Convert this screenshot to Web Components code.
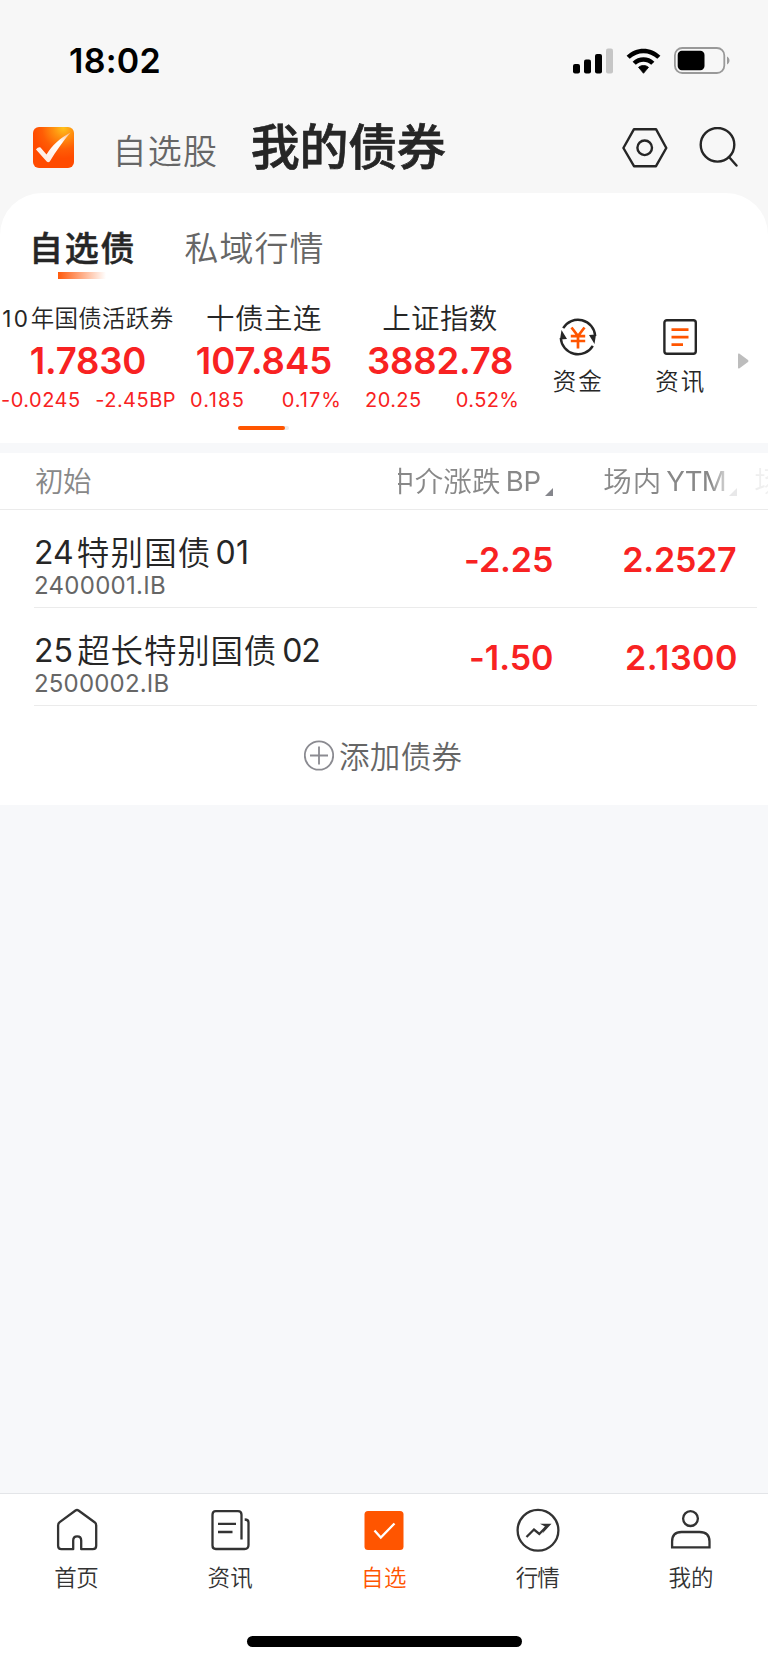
<!DOCTYPE html>
<html lang="zh-CN">
<head>
<meta charset="utf-8">
<title>我的债券</title>
<style>
html,body{margin:0;padding:0;background:#f7f8fa}
body{font-family:Inter,"Noto Sans CJK SC",sans-serif;color:#262626}
</style>
</head>
<body>
<bond-app></bond-app>
<script>
const define = (name, html) => customElements.define(name, class extends HTMLElement {
  constructor() {
    super();
    this.attachShadow({ mode: 'open' }).innerHTML = '<style>*{box-sizing:border-box}svg{display:block;flex:none}ink-text{flex:none}</style>' + html;
  }
});

/* A single line of text tracked out so that its drawn glyphs fill the width w. */
customElements.define('ink-text', class extends HTMLElement {
  constructor() {
    super();
    this.attachShadow({ mode: 'open' }).innerHTML =
      '<style>:host{display:block;white-space:nowrap}span{display:block}</style><span><slot></slot></span>';
  }
  connectedCallback() {
    const text = this.textContent.trim();
    const w = +this.getAttribute('w'), size = +this.getAttribute('s');
    const cjk = /[\u4e00-\u9fff]/.test(text);
    const weight = this.getAttribute('wt') || (cjk ? 350 : 400), line = this.getAttribute('h') || size;
    const ctx = document.createElement('canvas').getContext('2d');
    ctx.font = `${weight} ${size}px Inter, "Noto Sans CJK SC", sans-serif`;
    const m = ctx.measureText(text);
    const ink = m.actualBoundingBoxRight + m.actualBoundingBoxLeft;
    const n = [...text].length;
    const ls = n > 1 ? (w - ink) / (n - 1) : 0;
    this.style.cssText += `;width:${w}px;font-size:${size}px;font-weight:${weight};line-height:${line}px;letter-spacing:${ls.toFixed(3)}px`;
    this.shadowRoot.querySelector('span').style.marginLeft = m.actualBoundingBoxLeft + 'px';
  }
});

define('status-bar', `
<style>
:host{display:flex;align-items:center;height:121px;padding-left:70px;color:#000}
.cell{margin-left:413px}.wifi{margin-left:13px}.bat{margin-left:13px}
</style>
<ink-text w="89.5" s="34" wt="600" style="padding-top:1px">18:02</ink-text>
<svg class="cell" width="40" height="26" viewBox="0 0 40 26"><rect x="0" y="16" width="7" height="9.5" rx="2"/><rect x="11" y="11.5" width="7" height="14" rx="2"/><rect x="22" y="6" width="7" height="19.5" rx="2"/><rect x="33" y=".5" width="7" height="25" rx="2" fill="#c6c6c6"/></svg>
<svg class="wifi" width="35" height="26" viewBox="0 0 35 26"><path d="M.6 7.7C10-1.7 25-1.7 34.4 7.7L31.3 10.8C23.7 3.3 11.3 3.3 3.7 10.8Z"/><path d="M6.6 13.7C12.7 7.8 22.3 7.8 28.4 13.7L25.2 16.7C20.9 12.6 14.1 12.6 9.8 16.7Z"/><path d="M12.5 19.3C15.3 16.9 19.7 16.9 22.5 19.3L17.5 25.3Z" stroke="#000" stroke-width=".8" stroke-linejoin="round"/></svg>
<svg class="bat" width="56" height="27" viewBox="0 0 56 27"><rect x=".9" y="1" width="49.4" height="25" rx="7.4" fill="none" stroke="#999" stroke-width="1.8"/><rect x="3.7" y="3.8" width="26.8" height="19.4" rx="4.2"/><path d="M53 9.5C56.3 11 56.3 16 53 17.5Z" fill="#9b9b9b"/></svg>`);

define('app-header', `
<style>
:host{display:flex;align-items:center;height:72px;padding:0 0 19px 33px}
.other{color:#666;margin:8px 0 0 43.500px}.title{margin:-1px 0 0 35.800px;-webkit-text-stroke:.7px #262626}
.set{margin-left:177.500px}.find{margin-left:31px}
</style>
<svg width="41" height="41" viewBox="0 0 41 41"><defs><radialGradient id="g" cx=".74" cy=".02" r=".75"><stop offset="0" stop-color="#ffc21c"/><stop offset=".3" stop-color="#ff9410"/><stop offset=".7" stop-color="#ff5d05"/><stop offset="1" stop-color="#ff4b00"/></radialGradient><linearGradient id="c" x1="1" y1="0" x2=".3" y2="1"><stop offset="0" stop-color="#ffb27c"/><stop offset=".35" stop-color="#fff"/><stop offset="1" stop-color="#ffe9de"/></linearGradient></defs><rect width="41" height="41" rx="6" fill="url(#g)"/><path d="M3 22.5C4.500 20.700 6 20 7.500 20.500L13.500 27.500C19 18.500 27 11 37.500 5.500C30 14.500 23 24 16.800 34.500Q15.200 36 13.700 34.500Z" fill="url(#c)"/></svg>
<ink-text class="other" w="98.5" s="34">自选股</ink-text>
<ink-text class="title" w="193" s="49" wt="500">我的债券</ink-text>
<svg class="set" width="46" height="40" viewBox="0 0 46 40" fill="none" stroke="#262626" stroke-width="2.4"><path d="M12 1.200H34L44.300 20L34 38.200H12L1.400 20Z" stroke-linejoin="round"/><circle cx="22.700" cy="19.800" r="7.300"/></svg>
<svg class="find" width="39" height="41" viewBox="0 0 39 41" fill="none" stroke="#262626" stroke-width="2.4"><circle cx="18.500" cy="17.800" r="16.800"/><path d="M30 30L37.500 38.500" stroke-linecap="round"/></svg>`);

define('page-tabs', `
<style>
:host{display:flex;align-items:flex-start;padding:38px 0 0 34px;height:86px}
.bar{width:48px;height:7px;margin:6px 0 0 24px;background:linear-gradient(90deg,#ff5a0c,#fff)}
.off{color:#666;margin-left:51px}
.on{-webkit-text-stroke:.5px #262626}
</style>
<div><ink-text class="on" w="99.500" s="34" h="36">自选债</ink-text><div class="bar" style="margin-top:5px"></div></div>
<ink-text class="off" w="138" s="34" h="36">私域行情</ink-text>`.replace('s="34" h="36">自', 's="34" h="36" wt="500">自'));

define('quote-card', `
<style>
:host{display:flex;flex-direction:column;align-items:center;width:176px;flex:none;color:#f82222}
.name{display:flex;height:31px;gap:5px;color:#262626;margin-bottom:9px}
.row{display:flex;justify-content:space-between;align-self:stretch;margin-top:11px}
</style>
<div class="name"><slot name="name"></slot></div><slot name="price"></slot><div class="row"><slot name="change"></slot></div>`);

define('short-cut', `
<style>:host{display:flex;flex-direction:column;align-items:center;width:49px;color:#262626;padding-top:15px;gap:14px}</style>
<slot></slot>`);

define('market-strip', `
<style>
:host{display:block;height:163px;padding-top:24px}
.quotes{display:flex;height:107px}
.go{margin:50px 0 0 32px}
.track{width:51px;height:4px;border-radius:2px;background:#ebebeb;margin:16px 0 0 238px}
.fill{width:47px;height:4px;border-radius:2px;background:#ff5500}
.l1{margin-left:2px}.r1{margin-right:1.300px}.l2{margin-left:15px}.r2{margin-right:12.700px}.l3{margin-left:14px}.r3{margin-right:10.700px}
.s1{margin-left:25px}.s2{margin-left:53.500px}
</style>
<div class="quotes">
<quote-card><ink-text slot="name" w="23.300" s="22.500" h="31">10</ink-text><ink-text slot="name" w="141" s="23.500" h="31">年国债活跃券</ink-text><ink-text slot="price" w="114.500" s="36.500" h="36" wt="600">1.7830</ink-text><ink-text slot="change" class="l1" w="77" s="20">-0.0245</ink-text><ink-text slot="change" class="r1" w="78.500" s="20">-2.45BP</ink-text></quote-card>
<quote-card><ink-text slot="name" w="114" s="28.500" h="31">十债主连</ink-text><ink-text slot="price" w="134.500" s="36.500" h="36" wt="600">107.845</ink-text><ink-text slot="change" class="l2" w="51.700" s="20">0.185</ink-text><ink-text slot="change" class="r2" w="56.700" s="20">0.17%</ink-text></quote-card>
<quote-card><ink-text slot="name" w="113.500" s="28.500" h="31">上证指数</ink-text><ink-text slot="price" w="144" s="36.500" h="36" wt="600">3882.78</ink-text><ink-text slot="change" class="l3" w="54" s="20">20.25</ink-text><ink-text slot="change" class="r3" w="60.600" s="20">0.52%</ink-text></quote-card>
<short-cut class="s1"><svg width="38" height="38" viewBox="0 0 38 38" fill="none" stroke="#262626" stroke-width="2.4"><path d="M4.200 10.200A17.200 17.200 0 0 1 36.200 18M33.800 27.800A17.200 17.200 0 0 1 1.800 20"/><path d="M2.500 12L8 21L1 21.500ZM35.500 26L30 17L37 16.500Z" fill="#262626" stroke="none"/><path d="M12.500 9.500L19 18L25.500 9.500M11.800 18.200H26.200M11.800 23H26.200M19 18V30.500" stroke="#ff5500" stroke-width="2.700"/></svg><ink-text w="47.500" s="23.500" h="24">资金</ink-text></short-cut>
<short-cut class="s2"><svg width="38" height="38" viewBox="0 0 38 38" fill="none"><rect x="3.400" y="2.200" width="31.400" height="33.600" rx="2.500" stroke="#262626" stroke-width="2.400"/><path d="M10.500 11.700H27.500M10.500 19.200H27.500M10.500 26.700H22" stroke="#ff5500" stroke-width="2.700"/></svg><ink-text w="47.500" s="23.500" h="24">资讯</ink-text></short-cut>
<svg class="go" width="12" height="16" viewBox="0 0 12 16"><path d="M1 1.500Q1 0 2.200 .6L11 7Q12 8 11 9L2.200 15.400Q1 16 1 14.500Z" fill="#bdbdbd"/></svg>
</div>
<div class="track"><div class="fill"></div></div>`);

define('table-head', `
<style>
:host{display:flex;height:57px;align-items:center;border-bottom:1px solid #ebebeb;color:#888;padding-left:36px;box-sizing:border-box}
.scroll{display:flex;align-items:center;width:370px;height:56px;margin-left:307px;overflow:hidden;-webkit-mask-image:linear-gradient(90deg,#000 312px,rgba(0,0,0,.2) 332px,rgba(0,0,0,.12) 370px);mask-image:linear-gradient(90deg,#000 312px,rgba(0,0,0,.2) 332px,rgba(0,0,0,.12) 370px)}
ink-text{padding-top:3px}ink-text.en{padding-top:2px}
svg{margin:22px 0 0 4px}
</style>
<ink-text w="55" s="28.500">初始</ink-text>
<div class="scroll"><ink-text style="margin-left:-10px" w="112" s="28.500">中介涨跌</ink-text><ink-text class="en" style="margin-left:7.800px" w="32.700" s="27.500">BP</ink-text><svg width="8" height="8" style="margin-left:4.500px"><path d="M8 0V8H0Z" fill="#85868c"/></svg><ink-text style="margin-left:51.300px" w="54.400" s="28.500">场内</ink-text><ink-text class="en" style="margin-left:7.500px" w="58.600" s="27.500">YTM</ink-text><svg width="8" height="8"><path d="M8 0V8H0Z" fill="#85868c"/></svg><ink-text style="margin-left:18.500px" w="27" s="28.500">场</ink-text></div>`);

define('bond-row', `
<style>
:host{display:flex;height:98px;margin:0 11px 0 34px;padding:26px 0 0 2px;border-bottom:1px solid #ebebeb;box-sizing:border-box}
.id{display:flex;flex-direction:column;width:360px}
.name{display:flex;height:38px}
.code{color:#666;margin-left:-1px}
.v{display:flex;justify-content:flex-end;margin-top:7px;color:#f82222}
.bp{width:156px}.ytm{width:184px}
</style>
<div class="id"><div class="name"><slot name="name"></slot></div><div class="code"><slot name="code"></slot></div></div>
<div class="v bp"><slot name="bp"></slot></div><div class="v ytm"><slot name="ytm"></slot></div>`);

define('add-bond', `
<style>:host{display:flex;align-items:center;height:99px;padding-left:304px;color:#666}ink-text{margin:3px 0 0 6px}</style>
<svg width="30" height="31" viewBox="0 0 30 31" fill="none" stroke="#8b8b91"><circle cx="15" cy="15.500" r="14.200" stroke-width="1.800"/><path d="M6 15.500H24M15 6.500V24.500" stroke-width="1.800"/></svg>
<ink-text w="121.500" s="30.500">添加债券</ink-text>`);

define('tab-item', `
<style>:host{display:flex;flex:1;flex-direction:column;align-items:center;color:#333;padding-top:14px;gap:14px}:host([on]){color:#ff5500}</style><slot></slot>`);

define('tab-bar', `
<style>
:host{display:flex;height:143px;border-top:1px solid #e3e5e8;background:#fff;box-sizing:border-box}
</style>
<tab-item><svg width="44" height="44" viewBox="0 0 44 44" fill="none" stroke="#333" stroke-width="2.300" stroke-linejoin="round"><path d="M18.200 41.200H6.500Q3.100 41.200 3.100 37.800V17.500Q3.100 15.500 4.700 14.200L20.500 2.500Q22 1.500 23.500 2.500L39.600 14.200Q41.200 15.500 41.200 17.500V37.800Q41.200 41.200 37.800 41.200H26.200V32.500Q26.200 28.300 22.200 28.300Q18.200 28.300 18.200 32.500Z"/></svg><ink-text w="43" s="22.500" h="24">首页</ink-text></tab-item>
<tab-item><svg width="44" height="44" viewBox="0 0 44 44" fill="none" stroke="#333" stroke-width="2.300"><path d="M33.500 31.500V6.800Q33.500 3.200 30 3.200H7.800Q4.500 3.200 4.500 6.800V37.500Q4.500 41 7.800 41H36.500Q40.500 41 40.500 37V14.500Q40.500 11.500 36.700 11.500M10 15.800H28M10 24H24.500"/></svg><ink-text w="43.800" s="22.500" h="24">资讯</ink-text></tab-item>
<tab-item on><svg width="44" height="44" viewBox="0 0 44 44"><rect x="2.500" y="3" width="39" height="39" rx="3.500" fill="#ff5500"/><path d="M12.500 22.500L18.800 29.500L32.500 15.500" fill="none" stroke="#fff" stroke-width="2.300"/></svg><ink-text w="42" s="22.500" h="24" style="margin-left:2px">自选</ink-text></tab-item>
<tab-item><svg width="44" height="44" viewBox="0 0 44 44" fill="none" stroke="#333" stroke-width="2.300"><circle cx="22" cy="22.300" r="20.400"/><path d="M10.500 29L18 21.500L23.300 26L30 19"/><path d="M24 15.700H35.500L26.500 25.500L29 18.500Z" fill="#333" stroke="none"/></svg><ink-text w="43.500" s="22.500" h="24">行情</ink-text></tab-item>
<tab-item><svg width="44" height="44" viewBox="0 0 44 44" fill="none" stroke="#333" stroke-width="2.300"><circle cx="21.500" cy="10.600" r="7.400"/><path d="M3.100 39.300V33.500Q3.100 24 12.500 24H30.500Q40.500 24 40.500 33.500V39.300Z"/></svg><ink-text w="43.500" s="22.500" h="24" style="margin-right:2px">我的</ink-text></tab-item>`);

define('bond-app', `
<style>
:host{display:flex;flex-direction:column;width:768px;height:1663px;overflow:hidden}
.top{background:#f7f7f7}
.card{background:#fff;border-radius:42px 42px 0 0;height:249.500px}
.list{background:#fff;margin-top:10.500px}
.space{flex:1}
.home{background:#fff;height:27px}
.home div{width:275px;height:11px;border-radius:6px;background:#000;margin-left:247px}
</style>
<div class="top"><status-bar></status-bar><app-header></app-header><div class="card"><page-tabs></page-tabs><market-strip></market-strip></div></div>
<div class="list"><table-head></table-head>
<bond-row><ink-text slot="name" w="36" s="32" h="33">24</ink-text><ink-text slot="name" style="margin:0 7.700px 0 5.800px" w="131" s="32.500" h="35">特别国债</ink-text><ink-text slot="name" w="30.600" s="32" h="33">01</ink-text><ink-text slot="code" w="130" s="24">2400001.IB</ink-text><ink-text slot="bp" w="86" s="34" wt="600">-2.25</ink-text><ink-text slot="ytm" w="111.700" s="34" wt="600">2.2527</ink-text></bond-row>
<bond-row><ink-text slot="name" w="35.500" s="32" h="33">25</ink-text><ink-text slot="name" style="margin:0 8.500px 0 5.800px" w="197.500" s="32.500" h="35">超长特别国债</ink-text><ink-text slot="name" w="36" s="32" h="33">02</ink-text><ink-text slot="code" w="133.500" s="24">2500002.IB</ink-text><ink-text slot="bp" w="81" s="34" wt="600">-1.50</ink-text><ink-text slot="ytm" w="109" s="34" wt="600">2.1300</ink-text></bond-row>
<add-bond></add-bond></div>
<div class="space"></div>
<tab-bar></tab-bar>
<div class="home"><div></div></div>`);
</script>
</body>
</html>
